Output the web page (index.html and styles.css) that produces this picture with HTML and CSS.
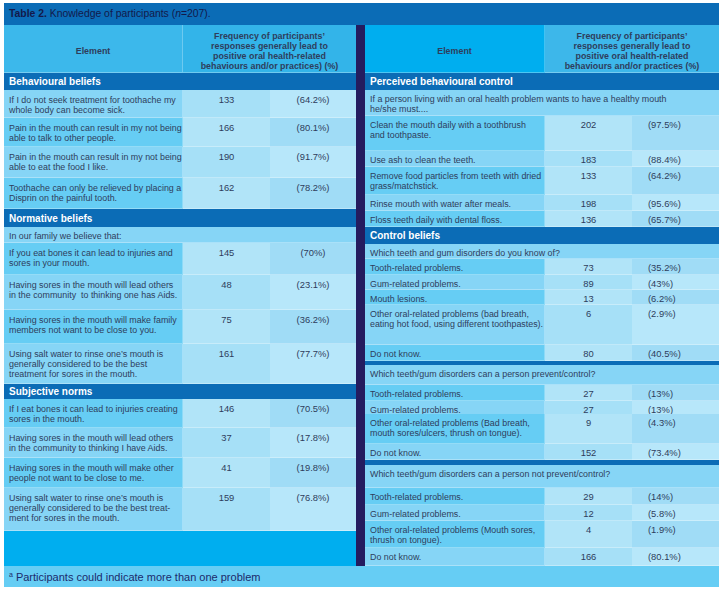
FILE: index.html
```html
<!DOCTYPE html>
<html>
<head>
<meta charset="utf-8">
<link rel="stylesheet" href="styles.css">
</head>
<body>
<div class="sheet">
  <div class="title"><b>Table 2.</b> Knowledge of participants (<i>n</i>=207).</div>
  <div class="body">
    <div class="panel left">
      <div class="row head">
        <div class="hc hel">Element</div>
        <div class="hc hfq">Frequency of participants’<br>responses generally lead to<br>positive oral health-related<br>behaviours and/or practices) (%)</div>
      </div>
      <div class="bar h17">Behavioural beliefs</div>
      <div class="row lt h28"><div class="el">If I do not seek treatment for toothache my<br>whole body can become sick.</div><div class="n">133</div><div class="p">(64.2%)</div></div>
      <div class="row dk h29"><div class="el">Pain in the mouth can result in my not being<br>able to talk to other people.</div><div class="n">166</div><div class="p">(80.1%)</div></div>
      <div class="row lt h31"><div class="el">Pain in the mouth can result in my not being<br>able to eat the food I like.</div><div class="n">190</div><div class="p">(91.7%)</div></div>
      <div class="row dk h31"><div class="el">Toothache can only be relieved by placing a<br>Disprin on the painful tooth.</div><div class="n">162</div><div class="p">(78.2%)</div></div>
      <div class="bar h18">Normative beliefs</div>
      <div class="q h16">In our family we believe that:</div>
      <div class="row dk h32"><div class="el">If you eat bones it can lead to injuries and<br>sores in your mouth.</div><div class="n">145</div><div class="p">(70%)</div></div>
      <div class="row lt h35"><div class="el">Having sores in the mouth will lead others<br>in the community&nbsp; to thinking one has Aids.</div><div class="n">48</div><div class="p">(23.1%)</div></div>
      <div class="row dk h34"><div class="el">Having sores in the mouth will make family<br>members not want to be close to you.</div><div class="n">75</div><div class="p">(36.2%)</div></div>
      <div class="row lt h40"><div class="el">Using salt water to rinse one’s mouth is<br>generally considered to be the best<br>treatment for sores in the mouth.</div><div class="n">161</div><div class="p">(77.7%)</div></div>
      <div class="bar h15">Subjective norms</div>
      <div class="row dk h29"><div class="el">If I eat bones it can lead to injuries creating<br>sores in the mouth.</div><div class="n">146</div><div class="p">(70.5%)</div></div>
      <div class="row lt h30"><div class="el">Having sores in the mouth will lead others<br>in the community to thinking I have Aids.</div><div class="n">37</div><div class="p">(17.8%)</div></div>
      <div class="row dk h30"><div class="el">Having sores in the mouth will make other<br>people not want to be close to me.</div><div class="n">41</div><div class="p">(19.8%)</div></div>
      <div class="row lt h43"><div class="el">Using salt water to rinse one’s mouth is<br>generally considered to be the best treat-<br>ment for sores in the mouth.</div><div class="n">159</div><div class="p">(76.8%)</div></div>
      <div class="filler"></div>
    </div>
    <div class="divider"></div>
    <div class="panel right">
      <div class="row head">
        <div class="hc hel">Element</div>
        <div class="hc hfq">Frequency of participants’<br>responses generally lead to<br>positive oral health-related<br>behaviours and/or practices (%)</div>
      </div>
      <div class="bar h17">Perceived behavioural control</div>
      <div class="q h26">If a person living with an oral health problem wants to have a healthy mouth<br>he/she must....</div>
      <div class="row dk h35"><div class="el">Clean the mouth daily with a toothbrush<br>and toothpaste.</div><div class="n">202</div><div class="p">(97.5%)</div></div>
      <div class="row lt h16"><div class="el">Use ash to clean the teeth.</div><div class="n">183</div><div class="p">(88.4%)</div></div>
      <div class="row dk h28"><div class="el">Remove food particles from teeth with dried<br>grass/matchstick.</div><div class="n">133</div><div class="p">(64.2%)</div></div>
      <div class="row lt h16"><div class="el">Rinse mouth with water after meals.</div><div class="n">198</div><div class="p">(95.6%)</div></div>
      <div class="row dk h16"><div class="el">Floss teeth daily with dental floss.</div><div class="n">136</div><div class="p">(65.7%)</div></div>
      <div class="bar h17">Control beliefs</div>
      <div class="q h15">Which teeth and gum disorders do you know of?</div>
      <div class="row dk h16"><div class="el">Tooth-related problems.</div><div class="n">73</div><div class="p">(35.2%)</div></div>
      <div class="row lt h15"><div class="el">Gum-related problems.</div><div class="n">89</div><div class="p">(43%)</div></div>
      <div class="row dk h15"><div class="el">Mouth lesions.</div><div class="n">13</div><div class="p">(6.2%)</div></div>
      <div class="row lt h40"><div class="el">Other oral-related problems (bad breath,<br>eating hot food, using different toothpastes).</div><div class="n">6</div><div class="p">(2.9%)</div></div>
      <div class="row dk h16"><div class="el">Do not know.</div><div class="n">80</div><div class="p">(40.5%)</div></div>
      <div class="rule r4"></div>
      <div class="q h20">Which teeth/gum disorders can a person prevent/control?</div>
      <div class="row dk h16"><div class="el">Tooth-related problems.</div><div class="n">27</div><div class="p">(13%)</div></div>
      <div class="row lt h13"><div class="el">Gum-related problems.</div><div class="n">27</div><div class="p">(13%)</div></div>
      <div class="row dk h30"><div class="el">Other oral-related problems (Bad breath,<br>mouth sores/ulcers, thrush on tongue).</div><div class="n">9</div><div class="p">(4.3%)</div></div>
      <div class="row lt h16"><div class="el">Do not know.</div><div class="n">152</div><div class="p">(73.4%)</div></div>
      <div class="rule r5"></div>
      <div class="q h23">Which teeth/gum disorders can a person not prevent/control?</div>
      <div class="row dk h17"><div class="el">Tooth-related problems.</div><div class="n">29</div><div class="p">(14%)</div></div>
      <div class="row lt h16"><div class="el">Gum-related problems.</div><div class="n">12</div><div class="p">(5.8%)</div></div>
      <div class="row dk h27"><div class="el">Other oral-related problems (Mouth sores,<br>thrush on tongue).</div><div class="n">4</div><div class="p">(1.9%)</div></div>
      <div class="row lt h18"><div class="el">Do not know.</div><div class="n">166</div><div class="p">(80.1%)</div></div>
    </div>
  </div>
  <div class="foot"><sup>a</sup> Participants could indicate more than one problem</div>
</div>
</body>
</html>
```

FILE: styles.css
```css
* { box-sizing: border-box; }
html, body { margin: 0; padding: 0; background: #ffffff; }
body { font-family: "Liberation Sans", Arial, sans-serif; }

.sheet {
  margin: 3px 0 0 4px;
  width: 715px;
  display: flex;
  flex-direction: column;
}

.title {
  height: 22px;
  background: #0b6cb6;
  color: #13194a;
  font-size: 10.4px;
  line-height: 22px;
  padding-left: 5px;
}
.title b { font-weight: bold; }

.body { display: flex; }

.panel { display: flex; flex-direction: column; }
.left { width: 352px; }
.right { width: 354px; }
.divider { width: 9px; background: #241c5f; }

.row { display: grid; }
.left .row { grid-template-columns: 179px 87px 86px; }
.right .row { grid-template-columns: 180px 87px 87px; }

.head { height: 48px; }
.hc {
  color: #1c2a6b;
  font-weight: bold;
  display: flex;
  align-items: center;
  justify-content: center;
  text-align: center;
}
.hel { font-size: 10px; border-right: 1px solid rgba(255,255,255,0.25); }
.hfq { grid-column: span 2; font-size: 8.9px; line-height: 10.3px; padding-top: 1px; }
.left .hel { background: #3cb8eb; }
.left .hfq { background: #33b4e9; }
.right .hel { background: #00aeef; }
.right .hfq { background: #3db7ea; }

.bar {
  background: #0b6cb6;
  color: #ffffff;
  font-weight: bold;
  font-size: 10px;
  padding-left: 5px;
  display: flex;
  align-items: center;
}

.q {
  background: #86d5f6;
  color: #2e3d5c;
  font-size: 8.9px;
  line-height: 10px;
  padding: 4px 5px 0;
  white-space: nowrap;
  border-bottom: 1px solid rgba(255,255,255,0.3);
}

.row > div {
  color: #2e3d5c;
  font-size: 8.9px;
  line-height: 10px;
  padding-top: 4px;
  white-space: nowrap;
  border-bottom: 1px solid rgba(255,255,255,0.3);
}
.left .row > div { padding-top: 5px; }
.row .el { padding-left: 5px; border-right: 1px solid rgba(255,255,255,0.25); }
.row .n { text-align: center; font-size: 9.4px; }
.row .p { font-size: 9.4px; }
.left .row .p { text-align: center; }
.right .row .p { padding-left: 16px; }

.dk .el { background: #66cdf4; }
.dk .n { background: #b1e4f8; }
.dk .p { background: #a0dcf6; }
.lt .el { background: #86d5f6; }
.lt .n { background: #a6e0f7; }
.lt .p { background: #b7e7fa; }

.rule { background: #0b6cb6; }
.r4 { height: 4px; }
.r5 { height: 5px; }
.filler { height: 35px; background: #00aeef; }

.h13 { height: 13px; }
.h15 { height: 15px; }
.h16 { height: 16px; }
.h17 { height: 17px; }
.h18 { height: 18px; }
.h20 { height: 20px; }
.h23 { height: 23px; }
.h26 { height: 26px; }
.h27 { height: 27px; }
.h28 { height: 28px; }
.h29 { height: 29px; }
.h30 { height: 30px; }
.h31 { height: 31px; }
.h32 { height: 32px; }
.h34 { height: 34px; }
.h35 { height: 35px; }
.h40 { height: 40px; }
.h43 { height: 43px; }

.foot {
  height: 21px;
  background: #66cdf4;
  color: #1c2a6b;
  font-size: 11px;
  padding-left: 5px;
  display: flex;
  align-items: center;
}
.foot sup { font-size: 7px; margin-right: 3px; position: relative; top: -2px; vertical-align: baseline; }
```
